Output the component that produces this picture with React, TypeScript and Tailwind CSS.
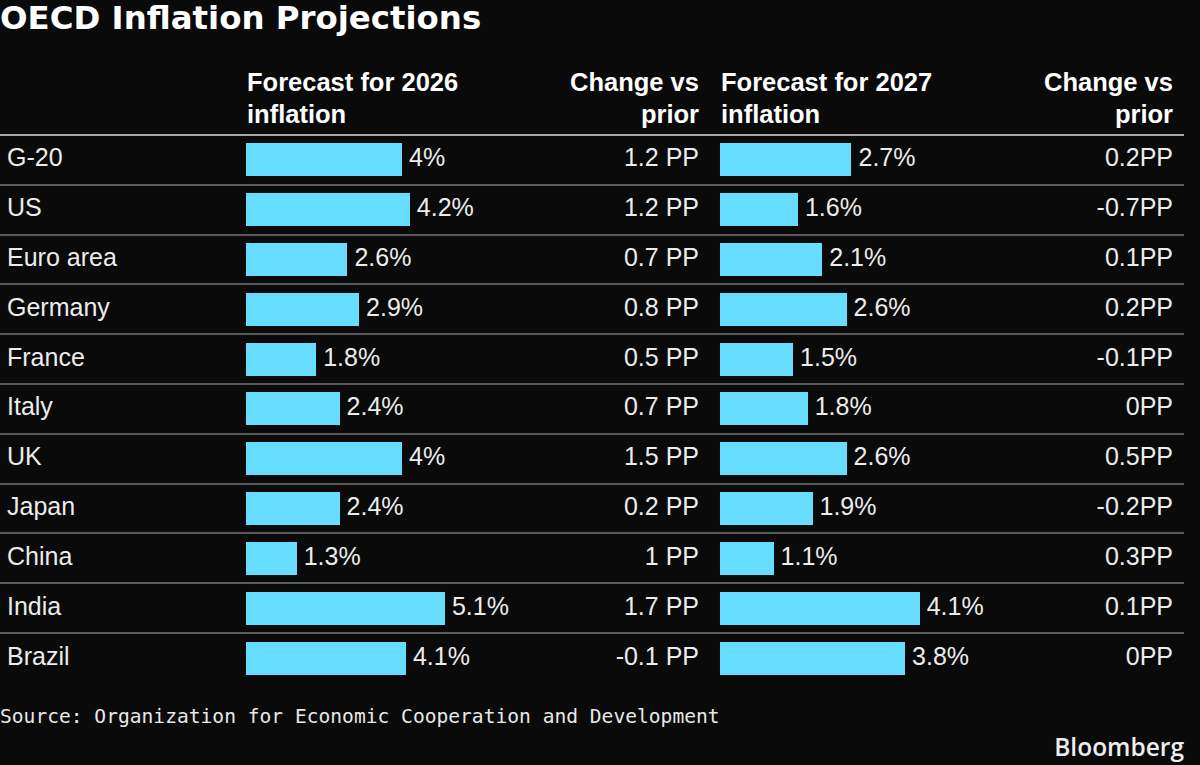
import React from "react";

type Row = { name: string; v26: number; c26: string; v27: number; c27: string; l26: string; l27: string };

const rows: Row[] = [
  { name: "G-20", v26: 4, l26: "4%", c26: "1.2 PP", v27: 2.7, l27: "2.7%", c27: "0.2PP" },
  { name: "US", v26: 4.2, l26: "4.2%", c26: "1.2 PP", v27: 1.6, l27: "1.6%", c27: "-0.7PP" },
  { name: "Euro area", v26: 2.6, l26: "2.6%", c26: "0.7 PP", v27: 2.1, l27: "2.1%", c27: "0.1PP" },
  { name: "Germany", v26: 2.9, l26: "2.9%", c26: "0.8 PP", v27: 2.6, l27: "2.6%", c27: "0.2PP" },
  { name: "France", v26: 1.8, l26: "1.8%", c26: "0.5 PP", v27: 1.5, l27: "1.5%", c27: "-0.1PP" },
  { name: "Italy", v26: 2.4, l26: "2.4%", c26: "0.7 PP", v27: 1.8, l27: "1.8%", c27: "0PP" },
  { name: "UK", v26: 4, l26: "4%", c26: "1.5 PP", v27: 2.6, l27: "2.6%", c27: "0.5PP" },
  { name: "Japan", v26: 2.4, l26: "2.4%", c26: "0.2 PP", v27: 1.9, l27: "1.9%", c27: "-0.2PP" },
  { name: "China", v26: 1.3, l26: "1.3%", c26: "1 PP", v27: 1.1, l27: "1.1%", c27: "0.3PP" },
  { name: "India", v26: 5.1, l26: "5.1%", c26: "1.7 PP", v27: 4.1, l27: "4.1%", c27: "0.1PP" },
  { name: "Brazil", v26: 4.1, l26: "4.1%", c26: "-0.1 PP", v27: 3.8, l27: "3.8%", c27: "0PP" },
];

function BarCell({ value, label, scale, change }: { value: number; label: string; scale: number; change: string }) {
  return (
    <div className="flex w-[453px] items-center justify-between">
      <div className="flex items-center">
        <div className="h-[33px] bg-[#66dcff]" style={{ width: `${value * scale}px` }} />
        <span className="ml-[7px] -mt-[5px]">{label}</span>
      </div>
      <span className="-mt-[5px]">{change}</span>
    </div>
  );
}

export default function App() {
  return (
    <div className="w-[1200px] h-[765px] bg-[#0a0a0a] text-[#ececec] overflow-hidden relative">
      <div
        className="text-[32.4px] leading-[37px] font-bold text-white"
        style={{ fontFamily: "'DejaVu Sans', sans-serif" }}
      >
        OECD Inflation Projections
      </div>
      <div className="w-[1184px] mt-[29px]" style={{ fontFamily: "'Liberation Sans', Arial, sans-serif" }}>
        <div className="flex text-[25.5px] leading-[32px] font-bold text-white border-b-2 border-[#a8a8a8] pb-[4px]">
          <div className="w-[246px]" />
          <div className="flex w-[453px] justify-between">
            <div className="pl-[1px]">
              Forecast for 2026
              <br />
              inflation
            </div>
            <div className="text-right">
              Change vs
              <br />
              prior
            </div>
          </div>
          <div className="flex w-[453px] ml-[21px] justify-between">
            <div className="pl-[1px]">
              Forecast for 2027
              <br />
              inflation
            </div>
            <div className="text-right">
              Change vs
              <br />
              prior
            </div>
          </div>
        </div>
        {rows.map((r, i) => (
          <div
            key={r.name}
            className={`flex items-center h-[49.8px] text-[25px] leading-[28px] ${i < rows.length - 1 ? "border-b-2 border-[#5a5a5a]" : ""}`}
          >
            <div className="w-[246px] pl-[7px] -mt-[5px]">{r.name}</div>
            <BarCell value={r.v26} label={r.l26} scale={39} change={r.c26} />
            <div className="w-[21px]" />
            <BarCell value={r.v27} label={r.l27} scale={48.7} change={r.c27} />
          </div>
        ))}
      </div>
      <div
        className="mt-[21px] text-[19.6px] leading-[24px] text-[#e8e8e8]"
        style={{ fontFamily: "'DejaVu Sans Mono', monospace" }}
      >
        Source: Organization for Economic Cooperation and Development
      </div>
      <div className="flex w-[1184px] justify-end mt-[6px]">
        <span
          className="text-[24.5px] leading-[24px] font-semibold text-[#ededed]"
          style={{ fontFamily: "'Open Sans', sans-serif" }}
        >
          Bloomberg
        </span>
      </div>
    </div>
  );
}
